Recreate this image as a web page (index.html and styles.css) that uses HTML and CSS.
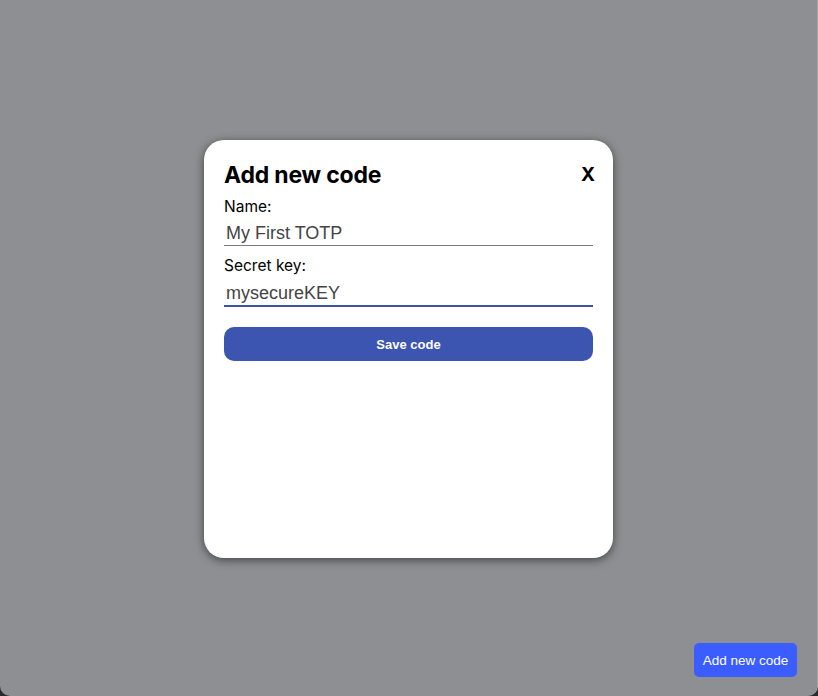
FILE: index.html
```html
<!DOCTYPE html>
<html>
<head>
<meta charset="utf-8">
<link rel="stylesheet" href="styles.css">
</head>
<body>
<div class="window">
  <div class="overlay">
    <div class="modal">
      <div class="modal-header">
        <h2 class="modal-title">Add new code</h2>
        <button class="close-btn">X</button>
      </div>
      <form class="form">
        <label class="field-label">Name:</label>
        <input class="field-input" type="text" value="My First TOTP">
        <label class="field-label label-gap">Secret key:</label>
        <input class="field-input focused" type="text" value="mysecureKEY">
        <button type="button" class="save-btn">Save code</button>
      </form>
    </div>
  </div>
  <button class="add-btn">Add new code</button>
</div>
</body>
</html>
```

FILE: styles.css
```css
html, body {
  margin: 0;
  padding: 0;
  height: 100%;
  background: #2a2a2c;
}
body {
  font-family: "Inter", "Liberation Sans", sans-serif;
}
.window {
  height: 696px;
  width: 818px;
  box-sizing: border-box;
  background: #8e8f93;
  border-right: 1px solid #a4a5a8;
  border-radius: 0 0 10px 10px;
  position: relative;
  overflow: hidden;
}
.overlay {
  height: 100%;
  display: flex;
  align-items: center;
  justify-content: center;
}
.modal {
  width: 409px;
  height: 418px;
  box-sizing: border-box;
  background: #ffffff;
  border-radius: 20px;
  padding: 20px;
  box-shadow: 0 2px 10px rgba(0, 0, 0, 0.55);
  margin-top: 2px;
}
.modal-header {
  display: flex;
  justify-content: space-between;
  align-items: center;
  height: 29px;
}
.modal-title {
  margin: 0;
  font-size: 23px;
  font-weight: 700;
  color: #000;
  letter-spacing: -0.2px;
}
.close-btn {
  background: none;
  border: none;
  padding: 0;
  margin-right: -2px;
  font-family: "Inter", sans-serif;
  font-weight: 700;
  font-size: 19px;
  color: #000;
}
.form {
  display: flex;
  flex-direction: column;
  margin-top: 8px;
}
.field-label {
  font-family: "Inter", "Liberation Sans", sans-serif;
  font-size: 15.5px;
  color: #000;
  line-height: 19px;
}
.label-gap {
  margin-top: 10px;
}
.field-input {
  font-family: "Liberation Sans", Arial, sans-serif;
  font-size: 18px;
  color: #444;
  border: none;
  border-bottom: 1px solid #7a7a7a;
  outline: none;
  padding: 5px 2px 0 2px;
  height: 29px;
  box-sizing: border-box;
  margin-top: 1px;
}
.field-input.focused {
  border-bottom: 2px solid #3b53ad;
  height: 31px;
}
.save-btn {
  margin-top: 20px;
  height: 34px;
  border: none;
  border-radius: 10px;
  background: #3c55b0;
  color: #fff;
  font-family: "Liberation Sans", Arial, sans-serif;
  font-weight: 700;
  font-size: 13px;
}
.add-btn {
  position: absolute;
  right: 20px;
  bottom: 19px;
  width: 103px;
  height: 34px;
  border: none;
  border-radius: 5px;
  background: #3b5cff;
  color: #fff;
  font-family: "Liberation Sans", Arial, sans-serif;
  font-size: 13.5px;
}
```
